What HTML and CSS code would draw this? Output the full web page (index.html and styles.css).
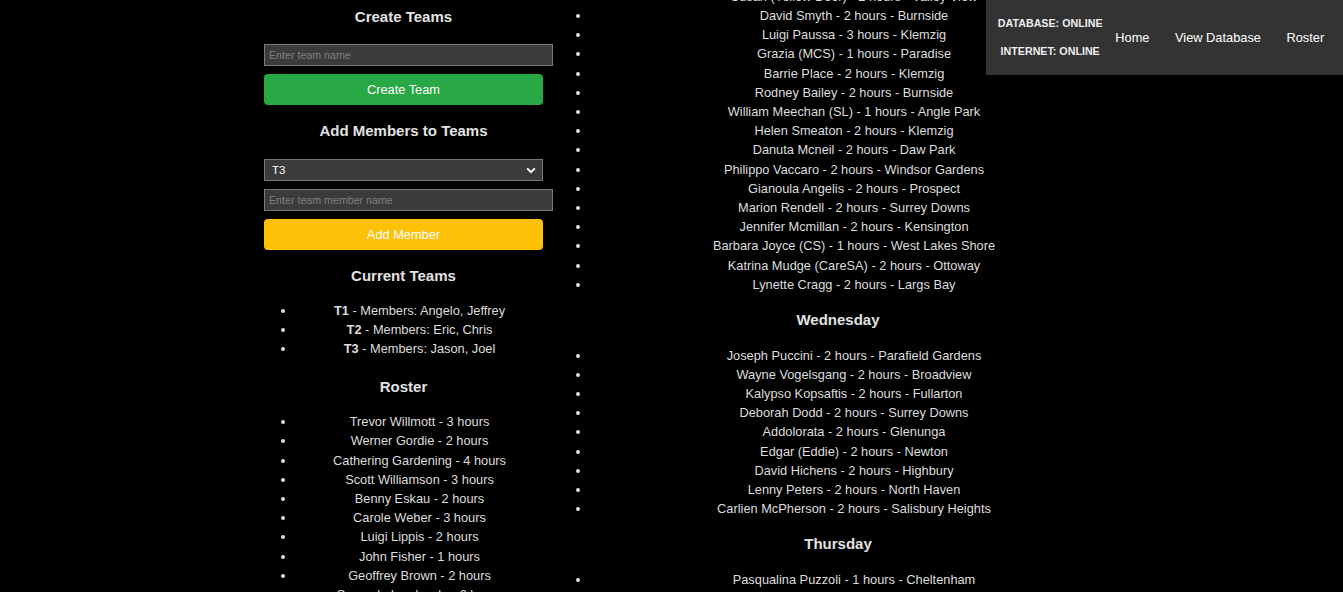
FILE: index.html
```html
<!DOCTYPE html>
<html lang="en">
<head>
<meta charset="utf-8">
<title>Roster</title>
<link rel="stylesheet" href="styles.css">
</head>
<body>
<nav class="topnav">
  <div class="status">
    <p class="status-line">DATABASE: ONLINE</p>
    <p class="status-line">INTERNET: ONLINE</p>
  </div>
  <a class="nav-link" href="#">Home</a>
  <a class="nav-link" href="#">View Database</a>
  <a class="nav-link" href="#">Roster</a>
</nav>

<div class="page">
  <section class="left">
    <h3 class="heading first">Create Teams</h3>
    <input class="field" type="text" placeholder="Enter team name">
    <button class="btn btn-green">Create Team</button>

    <h3 class="heading">Add Members to Teams</h3>
    <div class="select-wrap">
      <select class="select">
        <option>T1</option>
        <option>T2</option>
        <option selected>T3</option>
      </select>
      <svg class="chevron" width="10" height="7" viewBox="0 0 10 7"><path d="M1.2 1.4 L5 5.2 L8.8 1.4" fill="none" stroke="#fff" stroke-width="2"/></svg>
    </div>
    <input class="field" type="text" placeholder="Enter team member name">
    <button class="btn btn-yellow">Add Member</button>

    <h3 class="heading">Current Teams</h3>
    <ul class="list teams">
      <li><b>T1</b> - Members: Angelo, Jeffrey</li>
      <li><b>T2</b> - Members: Eric, Chris</li>
      <li><b>T3</b> - Members: Jason, Joel</li>
    </ul>

    <h3 class="heading">Roster</h3>
    <ul class="list">
      <li>Trevor Willmott - 3 hours</li>
      <li>Werner Gordie - 2 hours</li>
      <li>Cathering Gardening - 4 hours</li>
      <li>Scott Williamson - 3 hours</li>
      <li>Benny Eskau - 2 hours</li>
      <li>Carole Weber - 3 hours</li>
      <li>Luigi Lippis - 2 hours</li>
      <li>John Fisher - 1 hours</li>
      <li>Geoffrey Brown - 2 hours</li>
      <li>Samuele Lombardo - 2 hours</li>
    </ul>
  </section>

  <section class="middle">
    <ul class="list scrolled">
      <li>Susan (Yellow Door) - 2 hours - Valley View</li>
      <li>David Smyth - 2 hours - Burnside</li>
      <li>Luigi Paussa - 3 hours - Klemzig</li>
      <li>Grazia (MCS) - 1 hours - Paradise</li>
      <li>Barrie Place - 2 hours - Klemzig</li>
      <li>Rodney Bailey - 2 hours - Burnside</li>
      <li>William Meechan (SL) - 1 hours - Angle Park</li>
      <li>Helen Smeaton - 2 hours - Klemzig</li>
      <li>Danuta Mcneil - 2 hours - Daw Park</li>
      <li>Philippo Vaccaro - 2 hours - Windsor Gardens</li>
      <li>Gianoula Angelis - 2 hours - Prospect</li>
      <li>Marion Rendell - 2 hours - Surrey Downs</li>
      <li>Jennifer Mcmillan - 2 hours - Kensington</li>
      <li>Barbara Joyce (CS) - 1 hours - West Lakes Shore</li>
      <li>Katrina Mudge (CareSA) - 2 hours - Ottoway</li>
      <li>Lynette Cragg - 2 hours - Largs Bay</li>
    </ul>

    <h3 class="heading">Wednesday</h3>
    <ul class="list">
      <li>Joseph Puccini - 2 hours - Parafield Gardens</li>
      <li>Wayne Vogelsgang - 2 hours - Broadview</li>
      <li>Kalypso Kopsaftis - 2 hours - Fullarton</li>
      <li>Deborah Dodd - 2 hours - Surrey Downs</li>
      <li>Addolorata - 2 hours - Glenunga</li>
      <li>Edgar (Eddie) - 2 hours - Newton</li>
      <li>David Hichens - 2 hours - Highbury</li>
      <li>Lenny Peters - 2 hours - North Haven</li>
      <li>Carlien McPherson - 2 hours - Salisbury Heights</li>
    </ul>

    <h3 class="heading">Thursday</h3>
    <ul class="list">
      <li>Pasqualina Puzzoli - 1 hours - Cheltenham</li>
      <li>Maria Rossi - 2 hours - Campbelltown</li>
    </ul>
  </section>
</div>
</body>
</html>
```

FILE: styles.css
```css
html, body {
  margin: 0;
  padding: 0;
  background: #000;
  height: 592px;
  overflow: hidden;
}

body {
  font-family: "Liberation Sans", Arial, sans-serif;
  font-size: 12.8px;
  line-height: 1.5;
  color: #dddddd;
}

.page {
  display: flex;
  align-items: flex-start;
  gap: 16px;
  padding-left: 264px;
  height: 592px;
  overflow: hidden;
}

.left {
  width: 279px;
  flex: none;
  text-align: center;
}

.middle {
  width: 558px;
  flex: none;
  text-align: center;
}

.heading {
  font-size: 15px;
  line-height: 22.5px;
  font-weight: bold;
  margin: 15px 0 14px;
  color: #e2e2e2;
}

.heading.first {
  margin-top: 6px;
}

.field {
  display: block;
  width: 100%;
  box-sizing: content-box;
  height: 12px;
  padding: 4px 4px;
  border: 1px solid #7a7a7a;
  background: #3b3b3b;
  color: #eee;
  font-family: "Liberation Sans", Arial, sans-serif;
  font-size: 10.67px;
  line-height: 12px;
  margin: 0 0 8px;
  outline: none;
}

.heading + .field {
  margin-top: 15px;
}

.field::placeholder {
  color: #7f7f7f;
}

.select-wrap {
  position: relative;
  margin: 16.5px 0 8px;
}

.select {
  display: block;
  width: 100%;
  height: 22px;
  box-sizing: border-box;
  appearance: none;
  -webkit-appearance: none;
  background: #3b3b3b;
  color: #fff;
  border: 1px solid #7a7a7a;
  border-radius: 0;
  padding: 0 0 0 7px;
  font-family: "Liberation Sans", Arial, sans-serif;
  font-size: 11.5px;
  outline: none;
}

.chevron {
  position: absolute;
  right: 7px;
  top: 8px;
}

.btn {
  display: block;
  width: 100%;
  height: 31px;
  border: none;
  border-radius: 4px;
  color: #fff;
  font-family: "Liberation Sans", Arial, sans-serif;
  font-size: 12.8px;
  padding: 0;
  cursor: pointer;
}

.btn-green {
  background: #28a745;
}

.btn-yellow {
  background: #ffc107;
}

.list {
  list-style: disc;
  margin: 0;
  padding-left: 32px;
  line-height: 19.2px;
}

.list li {
  text-align: center;
}

.teams {
  margin-bottom: 17px;
}

.scrolled {
  margin-top: -13.2px;
}

.topnav {
  position: fixed;
  top: 0;
  right: 0;
  height: 75px;
  box-sizing: border-box;
  background: #333333;
  display: flex;
  align-items: center;
  padding: 0 6px 0 12px;
  white-space: nowrap;
}

.status {
  flex: none;
  display: flex;
  flex-direction: column;
  align-items: center;
  gap: 13px;
}

.status-line {
  margin: 0;
  font-size: 10.7px;
  font-weight: bold;
  line-height: 15px;
  color: #eeeeee;
}

.nav-link {
  flex: none;
  color: #fff;
  text-decoration: none;
  font-size: 12.8px;
  padding: 0 12.8px;
}
```
